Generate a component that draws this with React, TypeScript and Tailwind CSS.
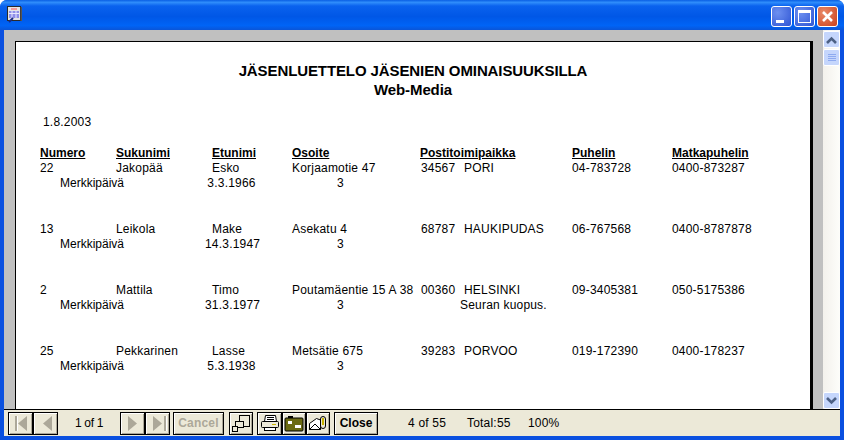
const members = [
  { nro: "22", suku: "Jakopää", etu: "Esko", osoite: "Korjaamotie 47", posti: "34567", kaupunki: "PORI", puh: "04-783728", gsm: "0400-873287", pvm: "3.3.1966", huom: "" },
  { nro: "13", suku: "Leikola", etu: "Make", osoite: "Asekatu 4", posti: "68787", kaupunki: "HAUKIPUDAS", puh: "06-767568", gsm: "0400-8787878", pvm: "14.3.1947", huom: "" },
  { nro: "2", suku: "Mattila", etu: "Timo", osoite: "Poutamäentie 15 A 38", posti: "00360", kaupunki: "HELSINKI", puh: "09-3405381", gsm: "050-5175386", pvm: "31.3.1977", huom: "Seuran kuopus." },
  { nro: "25", suku: "Pekkarinen", etu: "Lasse", osoite: "Metsätie 675", posti: "39283", kaupunki: "PORVOO", puh: "019-172390", gsm: "0400-178237", pvm: "5.3.1938", huom: "" },
]

const cols = "grid grid-cols-[76px_96px_80px_128px_152px_100px_1fr]"
const bevel = "border border-black bg-[#ece9d8] shadow-[inset_1px_1px_0_#fff,inset_-1px_-1px_0_#aca899] flex items-center justify-center h-[23px]"
const capBtn = "w-[21px] h-[21px] rounded-[3px] border border-white flex items-center justify-center"
const scrollBtn = "h-[17px] rounded-[2px] border border-white bg-[#c5d6fc] flex items-center justify-center"

function NavIcon({ dir, bar }: { dir: "left" | "right"; bar: boolean }) {
  const tri = dir === "left" ? "M17 3 L8 10.5 L17 18 Z" : "M6 3 L15 10.5 L6 18 Z"
  const barX = dir === "left" ? 5 : 17
  return (
    <svg width="22" height="21" viewBox="0 0 22 21">
      <path d={tri} fill="#aca899" />
      {bar && <rect x={barX} y="3" width="2" height="15" fill="#aca899" />}
      {bar && <rect x={barX + 2} y="3" width="1" height="15" fill="#fff" />}
    </svg>
  )
}

function Chevron({ up }: { up: boolean }) {
  return (
    <svg width="11" height="8" viewBox="0 0 11 8">
      <path d={up ? "M1 7 L5.5 2.5 L10 7" : "M1 1 L5.5 5.5 L10 1"} fill="none" stroke="#4d6185" strokeWidth="2.6" />
    </svg>
  )
}

export default function App() {
  return (
    <div className="w-[844px] h-[440px] overflow-hidden bg-white font-['Liberation_Sans',Arial,sans-serif] text-[12px] leading-[14px] text-black">
      <div className="h-full flex flex-col rounded-t-[7px] overflow-hidden bg-[#0a50e0]">
        {/* title bar */}
        <div className="h-[30px] shrink-0 flex items-center pl-[7px] pr-[6px] bg-[linear-gradient(180deg,#0a5fe4_0%,#2f8dfb_8%,#0a62ee_20%,#0057e6_55%,#0064f6_85%,#0a55d8_100%)]">
          <svg width="16" height="18" viewBox="0 0 16 18">
            <rect x="0.5" y="0.5" width="13" height="14" fill="#e4e4e4" stroke="#2a2a2a" />
            <rect x="13.5" y="1" width="1.5" height="14" fill="#555" />
            <rect x="4" y="2" width="6" height="2" fill="#f49a9a" />
            <rect x="2" y="5" width="10" height="7" fill="#8f8fe8" />
            <path d="M2 7.5h10M5 5v7M9 5v7" stroke="#e8e8ff" />
            <path d="M2 16 L6 12" stroke="#1c2a80" strokeWidth="2" />
          </svg>
          <div className="ml-auto flex gap-[2px] mt-[3px]">
            <div className={`${capBtn} items-end bg-[radial-gradient(circle_at_30%_30%,#6d90f0,#2f55d4)]`}>
              <div className="w-[8px] h-[3px] bg-white mb-[3px] mr-[3px]" />
            </div>
            <div className={`${capBtn} bg-[radial-gradient(circle_at_30%_30%,#6d90f0,#2f55d4)]`}>
              <div className="w-[13px] h-[13px] border border-white border-t-[3px]" />
            </div>
            <div className={`${capBtn} bg-[radial-gradient(circle_at_30%_30%,#ea8a68,#c9401c)]`}>
              <svg width="13" height="13" viewBox="0 0 13 13">
                <path d="M2 2 L11 11 M11 2 L2 11" stroke="#fff" strokeWidth="2.6" />
              </svg>
            </div>
          </div>
        </div>

        {/* client area */}
        <div className="flex-1 min-h-0 mx-[4px] mb-[4px] flex flex-col bg-[#ece9d8]">
          <div className="flex-1 min-h-0 flex">
            <div className="flex-1 min-w-0 bg-[#c0c0c0] pt-[11px] pl-[11px] pr-[10px]">
              <div className="h-full bg-white border-l border-t border-black border-r-[3px] tracking-[0.2px]">
                <div className="pt-[20px] text-center font-bold text-[15px] leading-[18px] tracking-[-0.1px]">
                  <div>JÄSENLUETTELO JÄSENIEN OMINAISUUKSILLA</div>
                  <div className="pt-[1px]">Web-Media</div>
                </div>
                <div className="pl-[27px] mt-[16px]">1.8.2003</div>
                <div className={`${cols} pl-[24px] mt-[17px] font-bold underline tracking-normal`}>
                  <div>Numero</div>
                  <div>Sukunimi</div>
                  <div>Etunimi</div>
                  <div>Osoite</div>
                  <div>Postitoimipaikka</div>
                  <div>Puhelin</div>
                  <div>Matkapuhelin</div>
                </div>
                <div className="flex flex-col gap-[31px] mt-[1px]">
                  {members.map((m) => (
                    <div key={m.nro} className="h-[30px]">
                      <div className={`${cols} pl-[24px] h-[15px]`}>
                        <div>{m.nro}</div>
                        <div>{m.suku}</div>
                        <div>{m.etu}</div>
                        <div>{m.osoite}</div>
                        <div className="flex pl-[1px]">
                          <span className="w-[43px]">{m.posti}</span>
                          <span>{m.kaupunki}</span>
                        </div>
                        <div>{m.puh}</div>
                        <div>{m.gsm}</div>
                      </div>
                      <div className="grid grid-cols-[145px_53px_79px_123px_1fr] pl-[44px] h-[15px]">
                        <div className="tracking-normal">Merkkipäivä</div>
                        <div className="text-center">{m.pvm}</div>
                        <div />
                        <div>3</div>
                        <div>{m.huom}</div>
                      </div>
                    </div>
                  ))}
                </div>
              </div>
            </div>

            {/* scrollbar */}
            <div className="w-[17px] shrink-0 pt-[1px] flex flex-col bg-[linear-gradient(90deg,#f3f1ec,#fdfdfa)]">
              <div className={scrollBtn}>
                <Chevron up />
              </div>
              <div className={`${scrollBtn} mt-[1px] flex-col gap-[1px]`}>
                <div className="w-[8px] h-px bg-[#8eaaf0]" />
                <div className="w-[8px] h-px bg-[#8eaaf0]" />
                <div className="w-[8px] h-px bg-[#8eaaf0]" />
                <div className="w-[8px] h-px bg-[#8eaaf0]" />
              </div>
              <div className="flex-1" />
              <div className={scrollBtn}>
                <Chevron up={false} />
              </div>
            </div>
          </div>

          {/* toolbar */}
          <div className="h-[27px] shrink-0 border-t border-black flex items-center pl-[4px] tracking-[0.2px]">
            <div className={`${bevel} w-[25px]`}><NavIcon dir="left" bar /></div>
            <div className={`${bevel} w-[25px]`}><NavIcon dir="left" bar={false} /></div>
            <div className="w-[62px] text-center tracking-[-0.3px]">1 of 1</div>
            <div className={`${bevel} w-[25px]`}><NavIcon dir="right" bar={false} /></div>
            <div className={`${bevel} w-[25px]`}><NavIcon dir="right" bar /></div>
            <div className={`${bevel} w-[51px] ml-[3px] font-bold text-[#aca899]`}>Cancel</div>
            <div className={`${bevel} w-[24px] ml-[5px]`}>
              <svg width="20" height="19" viewBox="0 0 20 19" fill="#ece9d8" stroke="#000">
                <rect x="8.5" y="1.5" width="10" height="11" />
                <rect x="4.5" y="7.5" width="8" height="6" />
                <rect x="1.5" y="12.5" width="5" height="5" />
              </svg>
            </div>
            <div className={`${bevel} w-[25px] ml-[4px]`}>
              <svg width="20" height="18" viewBox="0 0 20 18" fill="#fff" stroke="#000">
                <path d="M5.5 1.5 H15.5 L16.5 7.5 H4.5 Z" />
                <path d="M7 3.5h7M7 5.5h7" strokeWidth="1" />
                <rect x="1.5" y="7.5" width="17" height="6" rx="1" fill="#ece9d8" />
                <path d="M12 10.5 H16" stroke="#c8b400" />
                <rect x="4.5" y="13.5" width="11" height="3" />
              </svg>
            </div>
            <div className={`${bevel} w-[24px]`}>
              <svg width="20" height="17" viewBox="0 0 20 17">
                <rect x="1" y="3" width="18" height="13" rx="1" fill="#6b6b12" stroke="#000" />
                <rect x="4" y="1" width="5" height="2" fill="#000" />
                <rect x="4" y="6" width="4" height="3" fill="#fff" />
                <rect x="11" y="10" width="6" height="3" fill="#fff" />
              </svg>
            </div>
            <div className={`${bevel} w-[24px]`}>
              <svg width="20" height="18" viewBox="0 0 20 18" fill="#fff" stroke="#000">
                <path d="M1.5 9.5 L8.5 4.5 L12.5 6 V15.5 H1.5 Z" />
                <path d="M1.5 15.5 L7 10 L12.5 15.5" fill="none" />
                <rect x="12.5" y="2.5" width="5" height="12" rx="2.5" fill="#ece9d8" />
                <path d="M15 4 V11" stroke="#c8b400" strokeWidth="2" />
              </svg>
            </div>
            <div className={`${bevel} w-[44px] ml-[4px] font-bold tracking-normal`}>Close</div>
            <div className="ml-[30px] w-[59px]">4 of 55</div>
            <div className="w-[61px]">Total:55</div>
            <div>100%</div>
          </div>
        </div>
      </div>
    </div>
  )
}
